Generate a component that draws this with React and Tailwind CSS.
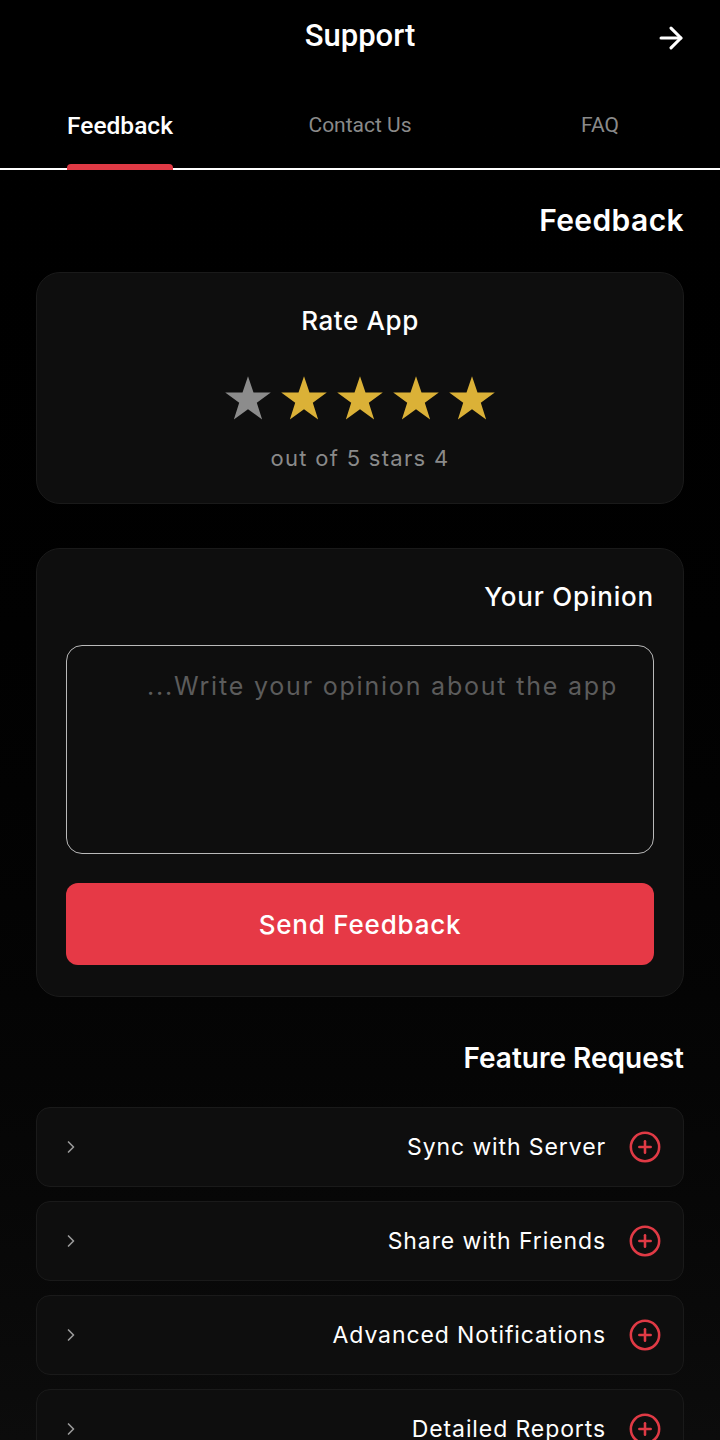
import React from 'react';
import { ArrowRight, ChevronRight, CirclePlus } from 'lucide-react';

const body = { fontFamily: 'Inter, "Noto Sans", sans-serif' };

function Star({ color }) {
  return (
    <svg width="48" height="46" viewBox="0 0 24 23" fill={color}>
      <path d="M12 0.6l2.75 8.2h8.65l-7 5.1 2.67 8.3L12 17.1l-7.07 5.1 2.67-8.3-7-5.1h8.65z" />
    </svg>
  );
}

const features = ['Sync with Server', 'Share with Friends', 'Advanced Notifications', 'Detailed Reports'];

export default function App() {
  return (
    <div className="h-[1440px] overflow-hidden bg-gradient-to-b from-black to-[#0c0c0c] text-white" style={body}>
      {/* header */}
      <header className="relative h-[76px] flex items-center justify-center pb-[3px]" style={{ fontFamily: 'Roboto, sans-serif' }}>
        <h1 className="text-[31px] font-medium">Support</h1>
        <ArrowRight className="absolute right-[32px] top-[21px]" size={34} strokeWidth={2.2} />
      </header>

      {/* tabs */}
      <nav className="relative grid grid-cols-3 h-[94px] border-b-2 border-white" style={{ fontFamily: 'Roboto, sans-serif' }}>
        <div className="relative flex items-center justify-center pt-[8px]">
          <span className="text-[24.5px] font-medium text-white">Feedback</span>
          <div className="absolute bottom-[-2px] left-[67px] w-[106px] h-[6px] rounded-t-[4px] bg-[#e03a45]" />
        </div>
        <div className="flex items-center justify-center pt-[8px] text-[21px] text-[#8a8a8a]">Contact Us</div>
        <div className="flex items-center justify-center pt-[8px] text-[21px] text-[#8a8a8a]">FAQ</div>
      </nav>

      <main className="px-[36px]">
        <h2 className="text-right text-[30px] font-semibold tracking-[0.4px] mt-[30px] leading-[40px]">Feedback</h2>

        {/* rate card */}
        <section className="mt-[32px] h-[232px] rounded-[24px] bg-[#0e0e0e] border border-[#1a1a1a] flex flex-col items-center">
          <h3 className="mt-[30px] text-[26px] font-medium tracking-[0.6px] leading-[36px]">Rate App</h3>
          <div className="mt-[36px] flex gap-[8px]">
            <Star color="#8c8c8c" />
            <Star color="#dbb137" />
            <Star color="#dbb137" />
            <Star color="#dbb137" />
            <Star color="#dbb137" />
          </div>
          <p className="mt-[21px] text-[22px] text-[#8a8a8a] tracking-[1.3px]">out of 5 stars 4</p>
        </section>

        {/* opinion card */}
        <section className="mt-[44px] h-[449px] rounded-[24px] bg-[#0e0e0e] border border-[#1a1a1a] px-[29px]">
          <h3 className="mt-[30px] text-right text-[26px] font-medium tracking-[0.8px] leading-[36px]">Your Opinion</h3>
          <div className="mt-[30px] h-[209px] rounded-[16px] border-[1.5px] border-[#b9b9b9] pt-[22px] pr-[35px] text-right">
            <span className="text-[25px] text-[#5c5c5c] tracking-[1.8px]">...Write your opinion about the app</span>
          </div>
          <button className="mt-[29px] w-full h-[82px] rounded-[12px] bg-[#e63946] text-[26px] font-medium tracking-[0.8px] text-white">
            Send Feedback
          </button>
        </section>

        <h2 className="text-right text-[28px] font-semibold mt-[42px] leading-[38px]">Feature Request</h2>

        <div className="mt-[30px] flex flex-col gap-[14px]">
          {features.map((f) => (
            <div key={f} className="h-[80px] rounded-[14px] bg-[#0e0e0e] border border-[#1a1a1a] flex items-center pl-[24px] pr-[21px]">
              <ChevronRight size={20} className="text-[#9a9a9a]" strokeWidth={2} />
              <span className="ml-auto text-[23px] tracking-[0.9px] text-white">{f}</span>
              <CirclePlus size={34} className="ml-[22px] text-[#e03a45]" strokeWidth={1.8} />
            </div>
          ))}
        </div>
      </main>
    </div>
  );
}
